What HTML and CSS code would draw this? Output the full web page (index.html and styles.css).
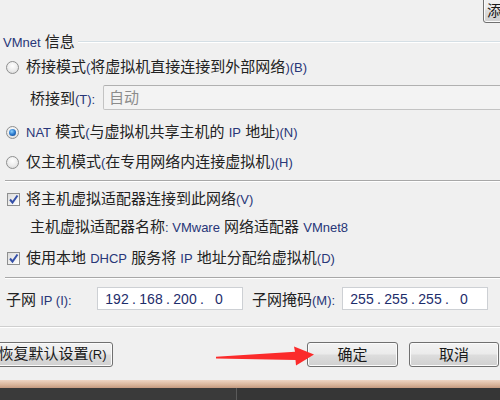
FILE: index.html
```html
<!DOCTYPE html>
<html lang="zh-CN">
<head>
    <meta charset="UTF-8">
    <meta name="viewport" content="width=device-width, initial-scale=1.0">
    <title>虚拟网络编辑器</title>
    <link rel="stylesheet" href="styles.css">
</head>
<body>
    <div class="dialog">
        <div class="top-bar">
            <button class="btn btn-add">添加网络<span class="en">(E)...</span></button>
        </div>

        <div class="group-title">
            <span><span class="en">VMnet</span> 信息</span>
            <div class="etched"></div>
        </div>

        <div class="option first">
            <span class="radio"></span>
            <span>桥接模式<span class="en">(</span>将虚拟机直接连接到外部网络<span class="en">)(B)</span></span>
        </div>

        <div class="bridge-row">
            <span class="bridge-label">桥接到<span class="en">(T):</span></span>
            <div class="select-box">自动</div>
        </div>

        <div class="option nat">
            <span class="radio checked"></span>
            <span><span class="en">NAT</span> 模式<span class="en">(</span>与虚拟机共享主机的 <span class="en">IP</span> 地址<span class="en">)(N)</span></span>
        </div>

        <div class="option">
            <span class="radio"></span>
            <span>仅主机模式<span class="en">(</span>在专用网络内连接虚拟机<span class="en">)(H)</span></span>
        </div>

        <div class="sep"></div>

        <div class="option check-first">
            <span class="checkbox">
                <svg width="11" height="11" viewBox="0 0 11 11"><path d="M2 5.5 L4.5 8.5 L9.5 1.5" fill="none" stroke="#3550a8" stroke-width="2"/></svg>
            </span>
            <span>将主机虚拟适配器连接到此网络<span class="en">(V)</span></span>
        </div>

        <div class="adapter-name">主机虚拟适配器名称<span class="en">: VMware</span> 网络适配器 <span class="en">VMnet8</span></div>

        <div class="option check-second">
            <span class="checkbox">
                <svg width="11" height="11" viewBox="0 0 11 11"><path d="M2 5.5 L4.5 8.5 L9.5 1.5" fill="none" stroke="#3550a8" stroke-width="2"/></svg>
            </span>
            <span>使用本地 <span class="en">DHCP</span> 服务将 <span class="en">IP</span> 地址分配给虚拟机<span class="en">(D)</span></span>
        </div>

        <div class="sep sep-low"></div>

        <div class="subnet-row">
            <span class="field-label">子网 <span class="en">IP (I):</span></span>
            <div class="ip-box">
                <span class="octet">192</span><span class="dot">.</span>
                <span class="octet">168</span><span class="dot">.</span>
                <span class="octet">200</span><span class="dot">.</span>
                <span class="octet">0</span>
            </div>
            <span class="field-label mask-label">子网掩码<span class="en">(M):</span></span>
            <div class="ip-box">
                <span class="octet">255</span><span class="dot">.</span>
                <span class="octet">255</span><span class="dot">.</span>
                <span class="octet">255</span><span class="dot">.</span>
                <span class="octet">0</span>
            </div>
        </div>

        <div class="sep sep-light"></div>

        <div class="actions">
            <button class="btn btn-reset">恢复默认设置<span class="en">(R)</span></button>
            <button class="btn btn-ok">确定</button>
            <button class="btn btn-cancel">取消</button>
        </div>

        <div class="frame-bottom"></div>
        <div class="taskbar">
            <div class="task-left"></div>
            <div class="task-right"></div>
        </div>

        <!-- red annotation arrow drawn over the dialog -->
        <svg class="arrow" width="500" height="400" viewBox="0 0 500 400">
            <path d="M216 356.8 L295 351.8 L294 346.5 L314 354.5 L296 365.5 L295.5 360 L216 358.4 Z" fill="#fb2b2b"/>
        </svg>
    </div>
</body>
</html>
```

FILE: styles.css
```css
body {
    margin: 0;
    width: 500px;
    height: 400px;
    overflow: hidden;
    background-color: #f0f0f0;
    font-family: "Liberation Sans", "Noto Sans CJK SC", sans-serif;
    font-size: 15px;
    color: #222;
}

.dialog {
    position: relative;
    display: flex;
    flex-direction: column;
    height: 400px;
}

.en {
    font-size: 13px;
    color: #283678;
}

.top-bar {
    height: 34px;
    display: flex;
    justify-content: flex-end;
}

.btn {
    font-family: "Liberation Sans", "Noto Sans CJK SC", sans-serif;
    font-size: 15px;
    color: #1a1a1a;
    border: 1px solid #707070;
    border-radius: 3px;
    background: linear-gradient(#f3f3f3 0%, #ebebeb 48%, #dddddd 52%, #d0d0d0 100%);
    box-shadow: inset 0 0 0 1px #fbfbfb;
    padding: 0;
    height: 25px;
    line-height: 20px;
}

.btn .en {
    color: #1a1a1a;
}

.btn-add {
    width: 110px;
    height: 27px;
    margin-top: -4px;
    margin-right: -93px;
    text-align: left;
    padding: 4px 0 0 3px;
}

.group-title {
    height: 16px;
    display: flex;
    align-items: center;
    padding-left: 3px;
    line-height: 16px;
}

.etched {
    flex: 1;
    margin-left: 3px;
    border-top: 1px solid #d5dfe5;
    border-bottom: 1px solid #ffffff;
}

.option {
    height: 30px;
    display: flex;
    align-items: center;
    line-height: 20px;
}

.option.first {
    margin-top: 2px;
}

.option.nat {
    margin-top: 7px;
}

.option.check-first {
    margin-top: 2px;
}

.option.check-second {
    margin-top: 3px;
}

.radio {
    position: relative;
    box-sizing: border-box;
    width: 13px;
    height: 13px;
    margin: 0 7px 0 6px;
    border-radius: 50%;
    border: 1px solid #8e8f8f;
    background: radial-gradient(circle at 50% 35%, #ffffff 0%, #ececec 55%, #d2d2d2 100%);
}

.radio.checked::after {
    content: "";
    position: absolute;
    top: 2px;
    left: 2px;
    width: 7px;
    height: 7px;
    border-radius: 50%;
    background: radial-gradient(circle at 40% 35%, #8fd3ff 0%, #2a78cc 50%, #0c3a7c 100%);
}

.checkbox {
    box-sizing: border-box;
    width: 13px;
    height: 13px;
    margin: 0 6px 0 7px;
    border: 1px solid #8e8f8f;
    background: linear-gradient(135deg, #dcdcdc, #ffffff);
    display: flex;
    align-items: center;
    justify-content: center;
}

.bridge-row {
    margin-top: 3px;
    height: 25px;
    display: flex;
    align-items: center;
    padding-left: 30px;
}

.bridge-label {
    width: 73px;
}

.select-box {
    flex: 1;
    box-sizing: border-box;
    height: 25px;
    margin-right: -10px;
    padding-left: 5px;
    border: 1px solid #c3c3c3;
    border-top-color: #b0b0b0;
    border-radius: 2px;
    background-color: #f3f3f3;
    color: #8c8c8c;
    line-height: 23px;
}

.sep {
    margin-top: 3px;
    margin-left: 5px;
    border-top: 1px solid #a8a8a8;
    border-bottom: 1px solid #ffffff;
}

.sep-low {
    margin-top: 4px;
}

.sep-light {
    margin-top: 16px;
    margin-left: 0;
    border-top-color: #cfcfcf;
}

.adapter-name {
    height: 26px;
    line-height: 26px;
    padding-left: 30px;
}

.subnet-row {
    margin-top: 8px;
    height: 23px;
    display: flex;
    align-items: center;
    padding-left: 6px;
}

.field-label {
    width: 91px;
}

.mask-label {
    width: 90px;
    margin-left: 9px;
}

.ip-box {
    box-sizing: border-box;
    width: 146px;
    height: 23px;
    padding-left: 5px;
    display: flex;
    align-items: center;
    border: 1px solid #cdd0d4;
    background-color: #ffffff;
    font-size: 14px;
    color: #1d2d6b;
}

.octet {
    width: 28px;
    text-align: center;
}

.dot {
    width: 6px;
    text-align: center;
}

.actions {
    margin-top: 14px;
    height: 25px;
    display: flex;
    gap: 11px;
    padding-right: 1px;
}

.btn-reset {
    width: 121px;
    margin-left: -8px;
}

.btn-ok {
    width: 91px;
    margin-left: auto;
}

.btn-cancel {
    width: 90px;
}

.frame-bottom {
    margin-top: 13px;
    height: 8px;
    background: linear-gradient(#efd6c4, #d9b59b 60%, #c49a80);
}

.taskbar {
    height: 12px;
    display: flex;
    background-color: #3a3a3a;
}

.task-left {
    width: 236px;
    border-right: 1px solid #5a5a5a;
}

.task-right {
    flex: 1;
    background-color: #363636;
}

.arrow {
    position: absolute;
    top: 0;
    left: 0;
    pointer-events: none;
}
```
